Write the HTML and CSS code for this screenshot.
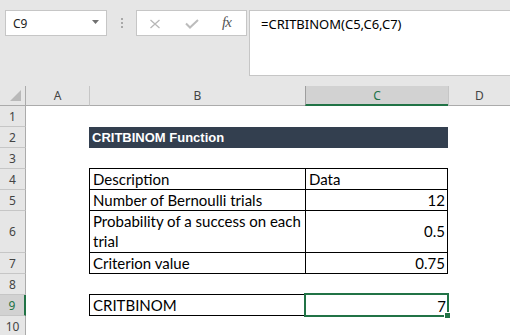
FILE: index.html
```html
<!DOCTYPE html>
<html lang="en">
<head>
    <meta charset="UTF-8">
    <meta name="viewport" content="width=device-width, initial-scale=1.0">
    <title>CRITBINOM Function</title>
    <link rel="stylesheet" href="styles.css">
</head>
<body>
    <div class="formula-bar">
        <div class="name-box">
            <span class="name-ref">C9</span>
            <svg class="name-arrow" width="7" height="4" viewBox="0 0 7 4"><path d="M0 0H7L3.5 4Z" fill="#707070"/></svg>
        </div>
        <div class="grip"><span></span><span></span><span></span></div>
        <div class="fn-box">
            <!-- cancel / enter / insert function -->
            <svg class="fn-cancel" width="12" height="10" viewBox="0 0 12 10"><path d="M1.5 1L10.5 9M10.5 1L1.5 9" stroke="#b8b8b8" stroke-width="1.3" fill="none"/></svg>
            <svg class="fn-enter" width="14" height="10" viewBox="0 0 14 10"><path d="M1 4.5L5 8.5L13 1" stroke="#bcbcbc" stroke-width="2" fill="none"/></svg>
            <span class="fx">fx</span>
        </div>
        <div class="formula-input">=CRITBINOM(C5,C6,C7)</div>
    </div>

    <div class="sheet">
        <div class="corner"><svg width="12" height="12" viewBox="0 0 12 12"><path d="M11 0V11H0Z" fill="#b9b9b9"/></svg></div>
        <div class="ch">A</div>
        <div class="ch edge">B</div>
        <div class="ch edge sel">C</div>
        <div class="ch edge">D</div>

        <div class="rh">1</div>
        <div class="c"></div><div class="c"></div><div class="c"></div><div class="c"></div>

        <div class="rh">2</div>
        <div class="c"></div>
        <div class="c title">CRITBINOM Function</div>
        <div class="c"></div>

        <div class="rh">3</div>
        <div class="c"></div><div class="c rule"></div><div class="c rule"></div><div class="c"></div>

        <div class="rh">4</div>
        <div class="c"></div>
        <div class="c box">Description</div>
        <div class="c box last">Data</div>
        <div class="c"></div>

        <div class="rh">5</div>
        <div class="c"></div>
        <div class="c box">Number of Bernoulli trials</div>
        <div class="c box last num">12</div>
        <div class="c"></div>

        <div class="rh">6</div>
        <div class="c"></div>
        <div class="c box wrap">Probability of a success on each<br>trial</div>
        <div class="c box last num mid">0.5</div>
        <div class="c"></div>

        <div class="rh">7</div>
        <div class="c"></div>
        <div class="c box">Criterion value</div>
        <div class="c box last num">0.75</div>
        <div class="c"></div>

        <div class="rh">8</div>
        <div class="c"></div><div class="c rule"></div><div class="c"></div><div class="c"></div>

        <div class="rh sel">9</div>
        <div class="c"></div>
        <div class="c box">CRITBINOM</div>
        <div class="c num active">7<span class="sel-frame"></span><span class="fill-handle"></span></div>
        <div class="c"></div>

        <div class="rh">10</div>
        <div class="c"></div><div class="c"></div><div class="c"></div><div class="c"></div>
    </div>
</body>
</html>
```

FILE: styles.css
```css
body, html {
    margin: 0;
    padding: 0;
    height: 100%;
    overflow: hidden;
    background: #e6e6e6;
}

/* formula bar */
.formula-bar {
    display: flex;
    align-items: flex-start;
    height: 86px;
    padding-top: 10px;
    box-sizing: border-box;
    font-family: "Noto Sans", sans-serif;
}

.name-box {
    display: flex;
    align-items: center;
    justify-content: space-between;
    box-sizing: border-box;
    width: 102px;
    height: 26px;
    margin-left: 5px;
    padding: 0 7px 0 7px;
    background: #fff;
    border: 1px solid #c6c6c6;
    font-size: 12px;
    color: #222;
}

.name-arrow {
    margin-top: -2px;
}

.grip {
    display: flex;
    flex-direction: column;
    gap: 2px;
    margin: 8px 13px 0 14px;
}

.grip span {
    width: 2px;
    height: 2px;
    background: #a8a8a8;
}

.fn-box {
    display: flex;
    align-items: center;
    box-sizing: border-box;
    width: 111px;
    height: 26px;
    padding-left: 12px;
    background: #fff;
    border: 1px solid #c6c6c6;
}

.fn-cancel {
    margin-top: 2px;
}

.fn-enter {
    margin: 2px 0 0 24px;
}

.fx {
    margin: -1px 0 0 23px;
    font-family: "Liberation Serif", serif;
    font-style: italic;
    font-size: 15px;
    color: #555;
    letter-spacing: -1px;
}

.formula-input {
    flex: 1;
    box-sizing: border-box;
    height: 66px;
    margin-left: 2px;
    padding: 4px 0 0 11px;
    background: #fff;
    border: 1px solid #c6c6c6;
    border-right: none;
    font-size: 13px;
    color: #000;
}

/* grid */
.sheet {
    display: grid;
    grid-template-columns: 26px 63px 216px 143px 1fr;
    grid-template-rows: 20px 21px 21px 21px 21px 21px 42px 21px 21px 21px 21px;
    background: #fff;
    font-family: "Lato", sans-serif;
    font-size: 15px;
}

.corner {
    display: flex;
    align-items: flex-end;
    justify-content: flex-end;
    padding: 0 3px 3px 0;
    background: #e6e6e6;
    border-right: 1px solid #ababab;
    border-bottom: 1px solid #ababab;
}

.ch, .rh {
    display: flex;
    align-items: center;
    justify-content: center;
    box-sizing: border-box;
    background: #e6e6e6;
    font-family: "Noto Sans", sans-serif;
    font-size: 12px;
    color: #444;
}

.ch {
    border-bottom: 1px solid #ababab;
}

.ch.edge {
    border-left: 1px solid #c6c6c6;
}

.ch.sel {
    background: #d2d2d2;
    border-left-color: #9e9e9e;
    border-bottom: 2px solid #217346;
    color: #217346;
}

.rh {
    border-right: 1px solid #ababab;
    border-bottom: 1px solid #c6c6c6;
}

.rh.sel {
    background: #d2d2d2;
    border-right: 2px solid #217346;
    color: #217346;
}

.c {
    display: flex;
    align-items: flex-end;
    box-sizing: border-box;
    padding: 0 3px 1px 3px;
    white-space: nowrap;
    color: #000;
}

.title {
    grid-column: span 2;
    background: #333f4f;
    color: #fff;
    font-family: "Liberation Sans", sans-serif;
    font-weight: bold;
    font-size: 13px;
    padding-bottom: 3px;
}

.rule {
    border-bottom: 1px solid #000;
}

.box {
    border-left: 1px solid #000;
    border-bottom: 1px solid #000;
}

.box.last {
    border-right: 1px solid #000;
}

.wrap {
    line-height: 20px;
}

.num {
    justify-content: flex-end;
    padding-right: 2px;
}

.mid {
    align-items: center;
}

.active {
    position: relative;
}

.sel-frame {
    position: absolute;
    top: -2px;
    left: -1px;
    right: -1px;
    bottom: -1px;
    border: 2px solid #217346;
}

.fill-handle {
    position: absolute;
    right: -3px;
    bottom: -3px;
    width: 7px;
    height: 7px;
    box-sizing: border-box;
    background: #217346;
    border: 1px solid #fff;
}
```
